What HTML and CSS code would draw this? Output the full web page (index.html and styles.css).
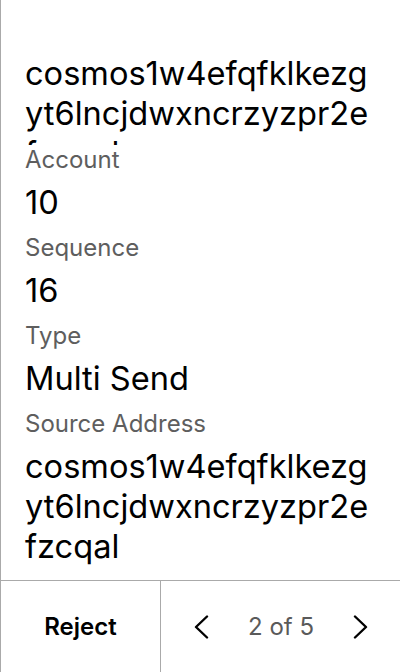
FILE: index.html
```html
<!DOCTYPE html>
<html lang="en">
<head>
<meta charset="utf-8">
<title>Transaction</title>
<link rel="stylesheet" href="styles.css">
</head>
<body>
<div class="screen">
  <div class="details">
    <div class="field field-clipped">
      <div class="value value-clip">cosmos1w4efqfklkezgyt6lncjdwxncrzyzpr2efzcqal</div>
    </div>
    <div class="field">
      <div class="label">Account</div>
      <div class="value">10</div>
    </div>
    <div class="field">
      <div class="label">Sequence</div>
      <div class="value">16</div>
    </div>
    <div class="field">
      <div class="label">Type</div>
      <div class="value">Multi Send</div>
    </div>
    <div class="field">
      <div class="label">Source Address</div>
      <div class="value">cosmos1w4efqfklkezgyt6lncjdwxncrzyzpr2efzcqal</div>
    </div>
  </div>
  <div class="footer">
    <div class="reject">Reject</div>
    <div class="pager">
      <svg class="chev" width="16" height="24" viewBox="0 0 16 24"><path d="M14 1.5 L3 12 L14 22.5" fill="none" stroke="#000" stroke-width="2.4" stroke-linecap="round" stroke-linejoin="round"/></svg>
      <span class="count">2 of 5</span>
      <svg class="chev" width="16" height="24" viewBox="0 0 16 24"><path d="M2 1.5 L13 12 L2 22.5" fill="none" stroke="#000" stroke-width="2.4" stroke-linecap="round" stroke-linejoin="round"/></svg>
    </div>
  </div>
</div>
</body>
</html>
```
FILE: styles.css
```css
* { box-sizing: border-box; }
html, body { margin: 0; padding: 0; background: #fff; }
body { font-family: Inter, "Noto Sans", sans-serif; color: #000; }
.screen {
  width: 400px;
  height: 672px;
  border-left: 1px solid #aaa;
  display: flex;
  flex-direction: column;
}
.details {
  flex: 1;
  overflow: hidden;
  padding: 53px 26px 0 24px;
  display: flex;
  flex-direction: column;
  gap: 10px;
}
.field { display: flex; flex-direction: column; gap: 6px; }
.field-clipped { margin-bottom: -11px; }
.label {
  font-size: 24px;
  line-height: 32px;
  color: #5e5e5e;
}
.value {
  font-size: 32.6px;
  line-height: 40px;
  color: #000;
  word-break: break-all;
}
.value-clip { max-height: 92px; overflow: hidden; }
.footer {
  height: 92px;
  border-top: 1px solid #aaa;
  display: flex;
}
.reject {
  width: 160px;
  border-right: 1px solid #aaa;
  display: flex;
  align-items: center;
  justify-content: center;
  font-size: 24px;
  font-weight: 600;
}
.pager {
  flex: 1;
  display: flex;
  align-items: center;
  justify-content: space-between;
  padding: 0 31px 0 32px;
}
.count { font-size: 24px; color: #5a5a5a; }
.chev { display: block; }
```
